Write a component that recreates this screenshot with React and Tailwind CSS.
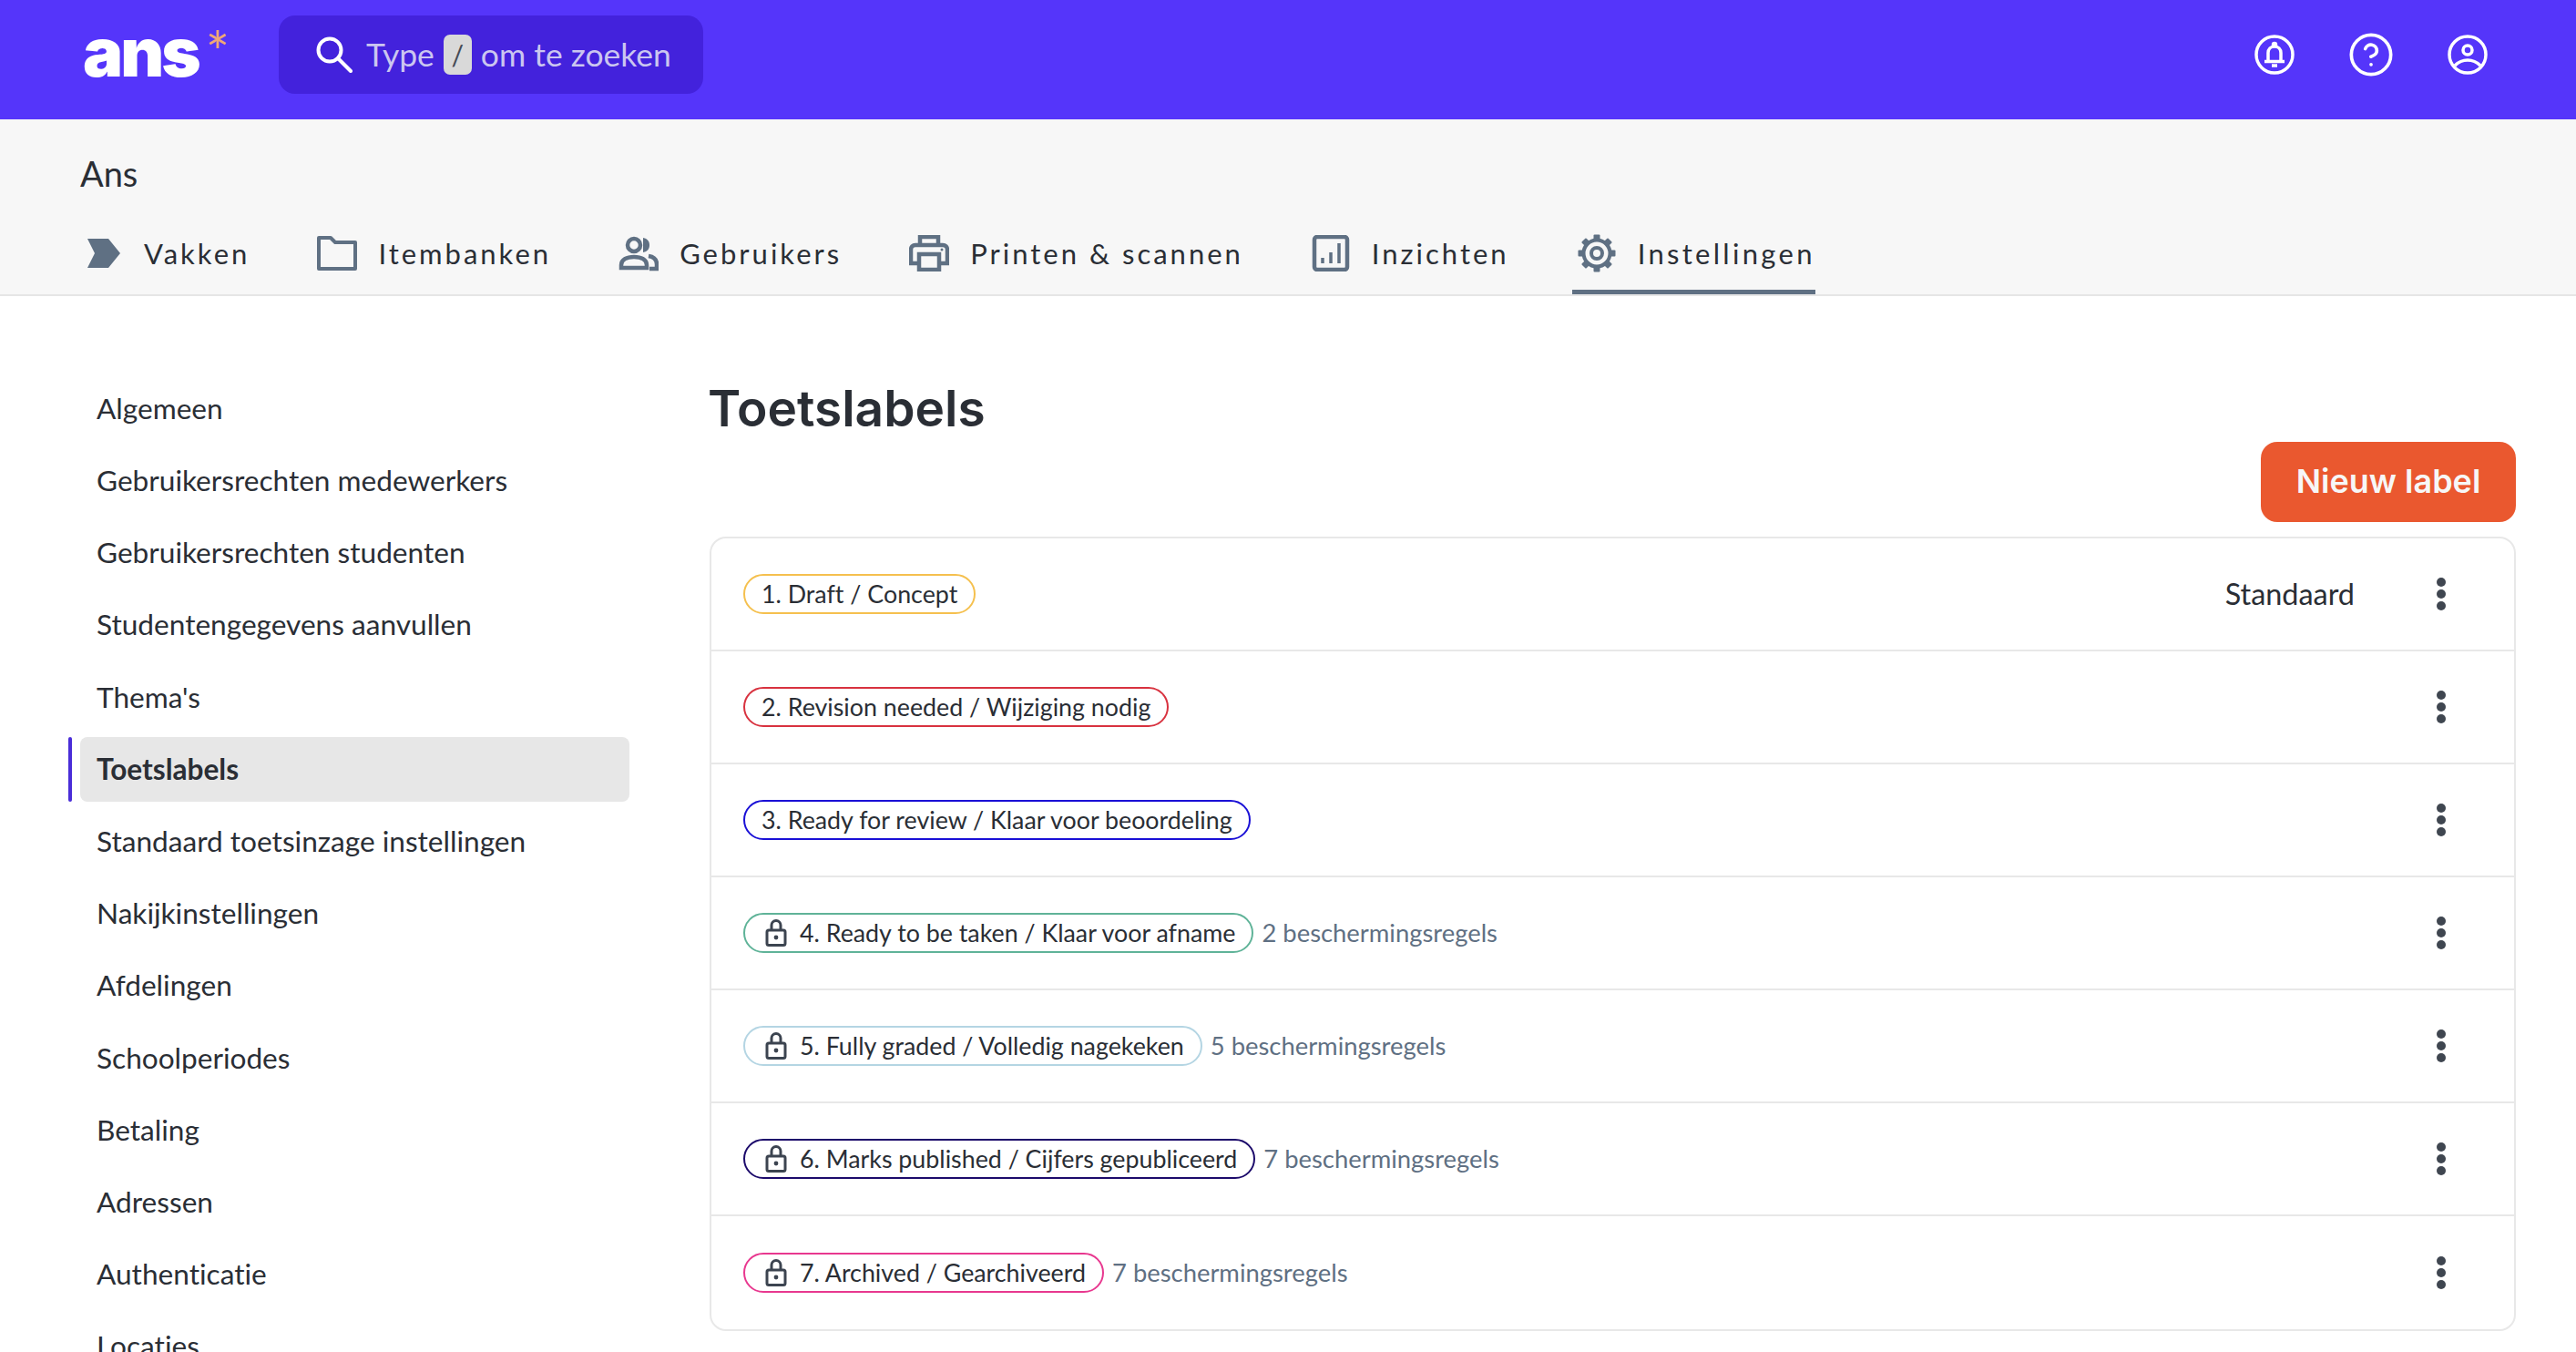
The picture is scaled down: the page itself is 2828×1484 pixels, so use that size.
import { CircleHelp } from "lucide-react";

const sans = "font-['Lato','Noto_Sans',sans-serif] [font-variant-ligatures:none]";

const tabs = [
  { name: "Vakken", icon: VakkenIcon },
  { name: "Itembanken", icon: FolderIcon },
  { name: "Gebruikers", icon: UsersIcon },
  { name: "Printen & scannen", icon: PrinterIcon },
  { name: "Inzichten", icon: ChartIcon },
  { name: "Instellingen", icon: GearIcon, active: true },
];

const menu = [
  "Algemeen",
  "Gebruikersrechten medewerkers",
  "Gebruikersrechten studenten",
  "Studentengegevens aanvullen",
  "Thema's",
  "Toetslabels",
  "Standaard toetsinzage instellingen",
  "Nakijkinstellingen",
  "Afdelingen",
  "Schoolperiodes",
  "Betaling",
  "Adressen",
  "Authenticatie",
  "Locaties",
];

const labels = [
  { name: "1. Draft / Concept", border: "border-[#f5c04e]", standard: true },
  { name: "2. Revision needed / Wijziging nodig", border: "border-[#d8323f]" },
  { name: "3. Ready for review / Klaar voor beoordeling", border: "border-[#1a10d6]" },
  { name: "4. Ready to be taken / Klaar voor afname", border: "border-[#5fb398]", rules: 2 },
  { name: "5. Fully graded / Volledig nagekeken", border: "border-[#b4d5e3]", rules: 5 },
  { name: "6. Marks published / Cijfers gepubliceerd", border: "border-[#1c0a6b]", rules: 7 },
  { name: "7. Archived / Gearchiveerd", border: "border-[#e8388f]", rules: 7 },
];

function VakkenIcon() {
  return (
    <svg viewBox="0 0 44 40" className="w-[44px] h-[40px]">
      <path d="M5 4h23l13 16-13 16H5l8-16z" fill="#5f7083" />
    </svg>
  );
}

function FolderIcon() {
  return (
    <svg viewBox="0 0 44 40" className="w-[44px] h-[40px]" fill="none" stroke="#5f7083" strokeWidth="4" strokeLinejoin="round">
      <path d="M2 3h13l5 5h22v29H2z" />
    </svg>
  );
}

function UsersIcon() {
  return (
    <svg viewBox="0 0 44 40" className="w-[44px] h-[40px]" fill="none" stroke="#5f7083" strokeWidth="4.5">
      <circle cx="17" cy="11" r="7" />
      <path d="M27 3c5 1 7 4 7 8s-2 7-7 8" fill="#5f7083" stroke="none" />
      <path d="M3 36v-3c0-6 6-9 14-9s14 3 14 9v3z" />
      <path d="M33 23c6 1 9 4 9 9v5h-8" />
    </svg>
  );
}

function PrinterIcon() {
  return (
    <svg viewBox="0 0 44 40" className="w-[44px] h-[40px]" fill="none" stroke="#5f7083" strokeWidth="4.5" strokeLinejoin="miter">
      <path d="M12 11V2h20v9" />
      <path d="M11 31H2V16c0-3 2-5 5-5h30c3 0 5 2 5 5v15h-9" />
      <path d="M11 21h22v17H11z" />
      <circle cx="36" cy="16" r="1.5" fill="#5f7083" stroke="none" />
    </svg>
  );
}

function ChartIcon() {
  return (
    <svg viewBox="0 0 44 40" className="w-[44px] h-[40px]" fill="none" stroke="#5f7083" strokeWidth="4.5">
      <rect x="4" y="2" width="36" height="36" rx="3" />
      <path d="M13 31v-6M22 31V19M31 31V9" strokeWidth="3.5" />
    </svg>
  );
}

// eight toothed gear, thicker than the lucide one
function GearIcon() {
  const teeth = [0, 45, 90, 135, 180, 225, 270, 315];
  return (
    <svg viewBox="0 0 44 46" className="w-[44px] h-[46px] -my-[3px]" fill="none" stroke="#5f7083" strokeWidth="4">
      <circle cx="22" cy="23" r="14.5" />
      <circle cx="22" cy="23" r="6" />
      {teeth.map((deg) => (
        <rect key={deg} x="18.5" y="2.5" width="7" height="6" rx="1" fill="#5f7083" stroke="none" transform={`rotate(${deg} 22 23)`} />
      ))}
    </svg>
  );
}

function SearchIcon() {
  return (
    <svg viewBox="0 0 40 40" className="w-[40px] h-[40px] shrink-0" fill="none" stroke="#fff" strokeWidth="4" strokeLinecap="round">
      <circle cx="15" cy="15" r="12.5" />
      <path d="M24 24l14 14" />
    </svg>
  );
}

function BellIcon() {
  return (
    <svg viewBox="0 0 44 44" className="w-[44px] h-[44px]" fill="none" stroke="#fff" strokeWidth="3.5">
      <circle cx="22" cy="22" r="20" />
      <path d="M15 29V20c0-4 3-7 7-7s7 3 7 7v9" />
      <path d="M11 29.5h22" />
      <path d="M19 34h6" />
      <circle cx="22" cy="11" r="1.5" fill="#fff" />
    </svg>
  );
}

function UserIcon() {
  return (
    <svg viewBox="0 0 44 44" className="w-[44px] h-[44px]" fill="none" stroke="#fff" strokeWidth="3.5">
      <circle cx="22" cy="22" r="20" />
      <circle cx="22" cy="17" r="5" />
      <path d="M8 34c4-4 9-6 14-6s10 2 14 6" />
    </svg>
  );
}

function LockIcon() {
  return (
    <svg viewBox="0 0 24 30" className="w-[24px] h-[30px] shrink-0" fill="none" stroke="#3c4450" strokeWidth="3">
      <rect x="2" y="12" width="20" height="16.5" rx="2" />
      <path d="M7 12V6.5a5 5 0 0 1 10 0V12" />
      <circle cx="12" cy="20" r="2.4" fill="#3c4450" stroke="none" />
    </svg>
  );
}

function KebabIcon() {
  return (
    <svg viewBox="0 0 10 36" className="w-[10px] h-[36px]" fill="#3f4650">
      <circle cx="5" cy="5" r="5" />
      <circle cx="5" cy="18" r="5" />
      <circle cx="5" cy="31" r="5" />
    </svg>
  );
}

function LabelRow({ label }) {
  const locked = label.rules != null;

  return (
    <div className="flex items-center h-[124px] pl-[35px] border-b-2 border-[#e8e8e8] last:border-b-0">
      <span
        className={`flex items-center h-[44px] rounded-full border-[2.5px] ${label.border} ${locked ? "pl-[22px] gap-[14px]" : "pl-[18px]"} pr-[18px] text-[26.8px] text-[#2a2e35]`}
      >
        {locked && <LockIcon />}
        {label.name}
      </span>
      {locked && <span className="ml-[9px] text-[27.4px] text-[#5f7083]">{label.rules} beschermingsregels</span>}
      <div className="ml-auto flex items-center">
        {label.standard && <span className="mr-[90px] text-[32.4px] text-[#2a2e35]">Standaard</span>}
        <span className="mr-[75px] flex">
          <KebabIcon />
        </span>
      </div>
    </div>
  );
}

export default function App() {
  return (
    <div className={`h-screen overflow-hidden bg-white ${sans}`}>
      <header className="flex items-center h-[131px] bg-[#5535fa] pl-[91px] pr-[97px] pb-[11px]">
        <div className="flex items-start w-[215px] h-[86px]">
          <span className="-mt-[3px] font-['Inter',sans-serif] font-black text-[74px] leading-[86px] tracking-[-3px] text-white">ans</span>
          <span className="ml-[8px] mt-[8px] text-[62px] leading-[62px] text-[#f0a877]">*</span>
        </div>
        <div className="flex items-center w-[466px] h-[86px] rounded-[18px] bg-[#4322dc] pl-[41px] text-[35.5px] text-[#cbc6f0]">
          <SearchIcon />
          <span className="ml-[15px]">Type</span>
          <kbd className="mx-[10px] flex items-center justify-center w-[31px] h-[44px] rounded-[7px] bg-[#d9d9d9] font-['Lato',sans-serif] text-[30px] text-[#454b55]">/</kbd>
          <span>om te zoeken</span>
        </div>
        <div className="ml-auto -mt-[1px] flex items-center gap-[62px]">
          <BellIcon />
          <CircleHelp size={52} strokeWidth={1.7} color="#fff" className="-mx-1" />
          <UserIcon />
        </div>
      </header>

      <div className="h-[194px] bg-[#f7f7f7] border-b-2 border-[#e6e6e6] flex flex-col justify-between">
        <div className="pl-[88px] pt-[37px] text-[38px] leading-[44px] text-[#2a2e35]">Ans</div>
        <nav className="flex gap-[69px] pl-[86px]">
          {tabs.map((tab) => {
            const Icon = tab.icon;
            return (
              <div
                key={tab.name}
                className={`flex items-center gap-[23px] h-[73px] pb-[12px] pl-[5px] border-b-[5px] ${tab.active ? "border-[#5f7083]" : "border-transparent"}`}
              >
                <Icon />
                <span className={`text-[31px] text-[#2a2e35] ${tab.active ? "tracking-[3.3px]" : "tracking-[3px]"}`}>{tab.name}</span>
              </div>
            );
          })}
        </nav>
      </div>

      <div className="flex">
        <aside className="w-[779px] shrink-0 pt-[88px] pl-[75px]">
          {menu.map((item) => {
            const active = item === "Toetslabels";
            return (
              <div key={item} className="flex h-[79.2px] pb-[8px]">
                <span className={`w-[4px] rounded-full ${active ? "bg-[#4a2dd8]" : ""}`} />
                <span
                  className={`ml-[9px] flex items-center w-[603px] pl-[18px] rounded-[8px] text-[31.6px] text-[#2a2e35] ${active ? "bg-[#e7e7e7] font-bold" : ""}`}
                >
                  {item}
                </span>
              </div>
            );
          })}
        </aside>

        <main className="w-[1983px] pt-[91px]">
          <h1 className="-ml-[2px] font-['Inter',sans-serif] font-semibold text-[55px] leading-[64px] text-[#2a2e35]">Toetslabels</h1>
          <div className="flex justify-end mt-[5px]">
            <button className="w-[280px] h-[88px] pb-[2px] rounded-[18px] bg-[#ea582f] font-['Inter',sans-serif] font-semibold text-[36px] text-[#f7f7f7]">
              Nieuw label
            </button>
          </div>
          <div className="mt-[16px] rounded-[18px] border-2 border-[#e8e8e8]">
            {labels.map((label) => (
              <LabelRow key={label.name} label={label} />
            ))}
          </div>
        </main>
      </div>
    </div>
  );
}
